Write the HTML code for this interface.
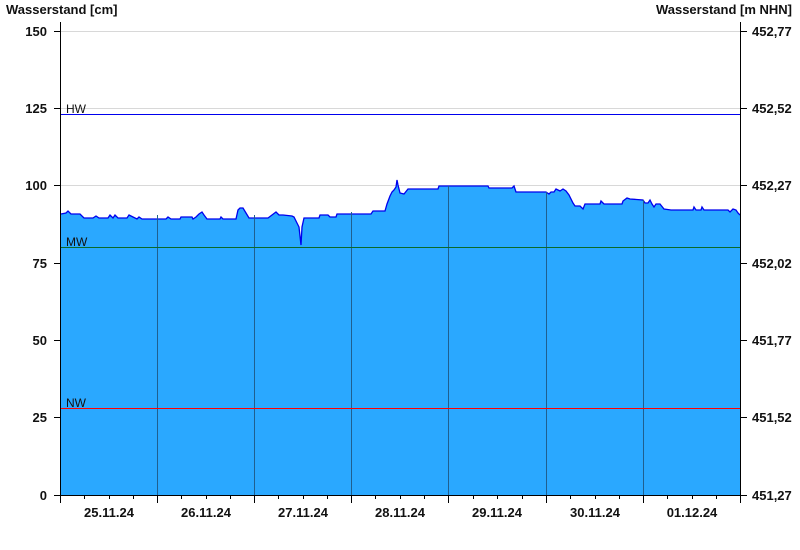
<!DOCTYPE html>
<html><head><meta charset="utf-8"><style>
html,body{margin:0;padding:0;background:#fff;}
svg{display:block;font-family:"Liberation Sans",Arial,sans-serif;}
.b{font-weight:bold;font-size:13px;fill:#111;}
.s{font-size:12px;fill:#111;}
</style></head><body>
<svg width="800" height="550" viewBox="0 0 800 550">
<text class="b" x="6" y="14">Wasserstand [cm]</text>
<text class="b" x="792" y="14" text-anchor="end">Wasserstand [m NHN]</text>
<g stroke="#d8d8d8" stroke-width="1">
<line x1="61" y1="31.5" x2="740" y2="31.5"/>
<line x1="61" y1="108.5" x2="740" y2="108.5"/>
<line x1="61" y1="185.5" x2="740" y2="185.5"/>
</g>
<path fill="#2aa8ff" stroke="none" d="M61,214 L66,213 68,211 71,214 80,214 84,218 93,218 96,216 99,218 108,218 110,215 113,218 115,215 118,218 127,218 129,215 133,217 137,219 139,217 142,219 166,219 168,217 171,219 180,219 181,217 192,217 193,219 196,217 199,214 202,212 204,215 207,219 220,219 221,217 223,219 236,219 238,210 240,208 243,208 246,213 249,218 268,218 272,215 276,212 279,215 283,215 292,216 294,217 296,221 299,227 300,236 301,245 302,227 304,218 319,218 320,215 328,215 330,217 336,217 337,214 371,214 373,211 385,211 387,204 390,196 392,192 394,190 396,187 397,180 398,185 400,193 404,194 408,189 438,189 439,186 488,186 489,188 512,188 514,186 516,192 546,192 549,194 551,192 554,192 556,189 560,191 563,189 566,191 569,195 573,203 575,206 580,206 583,209 585,204 600,204 601,201 604,204 622,204 623,201 627,198 630,199 643,200 645,203 648,203 650,200 652,204 654,207 656,204 660,204 664,209 671,210 693,210 694,207 696,210 701,210 702,207 704,210 728,210 730,212 733,209 736,210 738,213 740,215 L740,495 L61,495 Z"/>
<polyline fill="none" stroke="#0000ee" stroke-width="1.3" points="61,214 66,213 68,211 71,214 80,214 84,218 93,218 96,216 99,218 108,218 110,215 113,218 115,215 118,218 127,218 129,215 133,217 137,219 139,217 142,219 166,219 168,217 171,219 180,219 181,217 192,217 193,219 196,217 199,214 202,212 204,215 207,219 220,219 221,217 223,219 236,219 238,210 240,208 243,208 246,213 249,218 268,218 272,215 276,212 279,215 283,215 292,216 294,217 296,221 299,227 300,236 301,245 302,227 304,218 319,218 320,215 328,215 330,217 336,217 337,214 371,214 373,211 385,211 387,204 390,196 392,192 394,190 396,187 397,180 398,185 400,193 404,194 408,189 438,189 439,186 488,186 489,188 512,188 514,186 516,192 546,192 549,194 551,192 554,192 556,189 560,191 563,189 566,191 569,195 573,203 575,206 580,206 583,209 585,204 600,204 601,201 604,204 622,204 623,201 627,198 630,199 643,200 645,203 648,203 650,200 652,204 654,207 656,204 660,204 664,209 671,210 693,210 694,207 696,210 701,210 702,207 704,210 728,210 730,212 733,209 736,210 738,213 740,215"/>
<g stroke="#1f5f8f" stroke-width="1">
<line x1="157.5" y1="215" x2="157.5" y2="495"/>
<line x1="254.5" y1="215" x2="254.5" y2="495"/>
<line x1="351.5" y1="212" x2="351.5" y2="495"/>
<line x1="448.5" y1="186" x2="448.5" y2="495"/>
<line x1="546.5" y1="192" x2="546.5" y2="495"/>
<line x1="643.5" y1="200" x2="643.5" y2="495"/>
</g>
<line x1="61" y1="114.5" x2="740" y2="114.5" stroke="#0000ee" stroke-width="1"/>
<line x1="61" y1="247.5" x2="740" y2="247.5" stroke="#0a6a2a" stroke-width="1"/>
<line x1="61" y1="408.5" x2="740" y2="408.5" stroke="#ff0000" stroke-width="1"/>
<text class="s" x="66" y="113">HW</text>
<text class="s" x="66" y="246">MW</text>
<text class="s" x="66" y="407">NW</text>
<g stroke="#000" stroke-width="1">
<line x1="60.5" y1="22" x2="60.5" y2="496"/>
<line x1="740.5" y1="22" x2="740.5" y2="496"/>
<line x1="60" y1="495.5" x2="741" y2="495.5"/>
<line x1="54" y1="31.5" x2="60" y2="31.5"/><line x1="54" y1="108.5" x2="60" y2="108.5"/><line x1="54" y1="185.5" x2="60" y2="185.5"/><line x1="54" y1="263.5" x2="60" y2="263.5"/><line x1="54" y1="340.5" x2="60" y2="340.5"/><line x1="54" y1="417.5" x2="60" y2="417.5"/><line x1="54" y1="495.5" x2="60" y2="495.5"/>
<line x1="741" y1="31.5" x2="747" y2="31.5"/><line x1="741" y1="108.5" x2="747" y2="108.5"/><line x1="741" y1="185.5" x2="747" y2="185.5"/><line x1="741" y1="263.5" x2="747" y2="263.5"/><line x1="741" y1="340.5" x2="747" y2="340.5"/><line x1="741" y1="417.5" x2="747" y2="417.5"/><line x1="741" y1="495.5" x2="747" y2="495.5"/>
<line x1="60.5" y1="495" x2="60.5" y2="503"/><line x1="157.5" y1="495" x2="157.5" y2="503"/><line x1="254.5" y1="495" x2="254.5" y2="503"/><line x1="351.5" y1="495" x2="351.5" y2="503"/><line x1="448.5" y1="495" x2="448.5" y2="503"/><line x1="546.5" y1="495" x2="546.5" y2="503"/><line x1="643.5" y1="495" x2="643.5" y2="503"/><line x1="740.5" y1="495" x2="740.5" y2="503"/>
<line x1="84.5" y1="495" x2="84.5" y2="499"/><line x1="109.5" y1="495" x2="109.5" y2="499"/><line x1="133.5" y1="495" x2="133.5" y2="499"/>
<line x1="181.5" y1="495" x2="181.5" y2="499"/><line x1="206.5" y1="495" x2="206.5" y2="499"/><line x1="230.5" y1="495" x2="230.5" y2="499"/>
<line x1="278.5" y1="495" x2="278.5" y2="499"/><line x1="303.5" y1="495" x2="303.5" y2="499"/><line x1="327.5" y1="495" x2="327.5" y2="499"/>
<line x1="375.5" y1="495" x2="375.5" y2="499"/><line x1="400.5" y1="495" x2="400.5" y2="499"/><line x1="424.5" y1="495" x2="424.5" y2="499"/>
<line x1="473.5" y1="495" x2="473.5" y2="499"/><line x1="497.5" y1="495" x2="497.5" y2="499"/><line x1="522.5" y1="495" x2="522.5" y2="499"/>
<line x1="570.5" y1="495" x2="570.5" y2="499"/><line x1="595.5" y1="495" x2="595.5" y2="499"/><line x1="619.5" y1="495" x2="619.5" y2="499"/>
<line x1="667.5" y1="495" x2="667.5" y2="499"/><line x1="692.5" y1="495" x2="692.5" y2="499"/><line x1="716.5" y1="495" x2="716.5" y2="499"/>
</g>
<g class="b" text-anchor="end">
<text x="47" y="36">150</text><text x="47" y="113">125</text><text x="47" y="190">100</text><text x="47" y="268">75</text><text x="47" y="345">50</text><text x="47" y="422">25</text><text x="47" y="500">0</text>
</g>
<g class="b">
<text x="752" y="36">452,77</text><text x="752" y="113">452,52</text><text x="752" y="190">452,27</text><text x="752" y="268">452,02</text><text x="752" y="345">451,77</text><text x="752" y="422">451,52</text><text x="752" y="500">451,27</text>
</g>
<g class="b" text-anchor="middle">
<text x="109" y="517">25.11.24</text><text x="206" y="517">26.11.24</text><text x="303" y="517">27.11.24</text><text x="400" y="517">28.11.24</text><text x="497" y="517">29.11.24</text><text x="595" y="517">30.11.24</text><text x="692" y="517">01.12.24</text>
</g>
</svg>
</body></html>
